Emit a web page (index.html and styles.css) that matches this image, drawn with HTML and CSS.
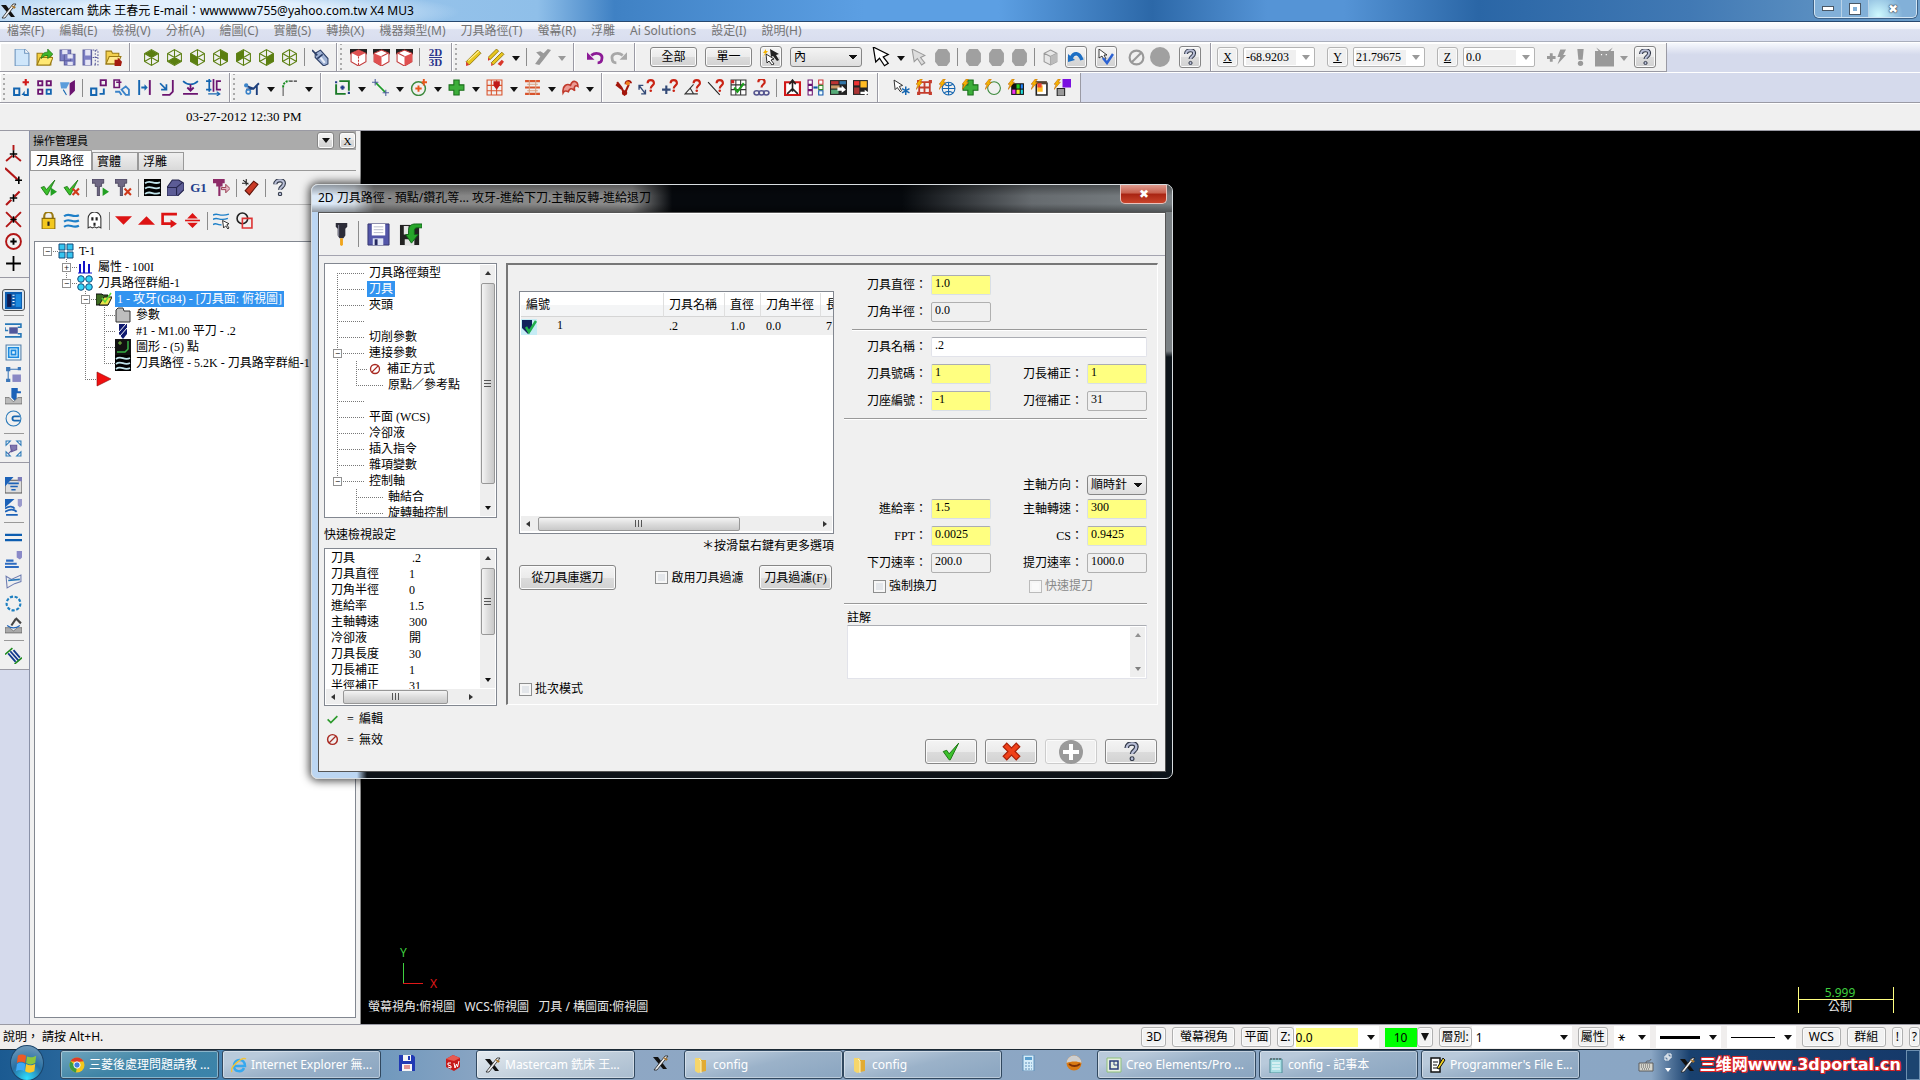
FILE: index.html
```html
<!DOCTYPE html>
<html lang="zh-Hant">
  <head>
    <meta charset="utf-8">
    <title>Mastercam X4 MU3</title>
    <link rel="stylesheet" href="styles.css">
  </head>
  <body>
    <svg class="sprite" aria-hidden="true">
      <!-- files -->
      <symbol id="new" viewBox="0 0 16 16"><path d="M2 0h9l4 4v12H2z" fill="#cfe6fa" stroke="#6c93bd"/><path d="M11 0v4h4" fill="#fff" stroke="#6c93bd"/></symbol>
      <symbol id="open" viewBox="0 0 16 16"><path d="M1 4h5l1 2h7v9H1z" fill="#f5d040" stroke="#9a7a12"/><path d="M1 15l3-7h12l-3 7z" fill="#ffe873" stroke="#9a7a12"/><path d="M5 9c0-5 3-6 6-6V0l5 5-5 4V6c-3 0-4 1-6 3z" fill="#3fb52c" stroke="#1b6b10" stroke-width=".6"/></symbol>
      <symbol id="save" viewBox="0 0 16 16"><path d="M1 1h10v10H1zM5 5h10v10H5z" fill="#7d7fc4" stroke="#5a5c9c"/><path d="M3 1h5v4H3zM8 5h5v4H8zM8 12h5v3H8z" fill="#e6e6f5"/></symbol>
      <symbol id="savepart" viewBox="0 0 16 16"><path d="M1 1h8v14H1z" fill="#7d7fc4" stroke="#5a5c9c"/><path d="M3 1h5v5H3zM3 10h5v5H3z" fill="#e6e6f5"/><path d="M10 1h5v14h-5M12.5 1v14M10 8h5" fill="none" stroke="#5a5c9c" stroke-dasharray="1.5 1.5"/></symbol>
      <symbol id="import" viewBox="0 0 16 16"><path d="M1 2h5l1 2h6v10H1z" fill="#f3d04d" stroke="#9a7a12"/><path d="M1 14l3-7h11l-3 7z" fill="#ffe98c" stroke="#9a7a12"/><path d="M9 10h3V8l4 4-1 4H9z" fill="#a31b10"/></symbol>
      <!-- view cubes -->
      <symbol id="wire" viewBox="0 0 16 16"><path d="M8 .6l6.5 3.7v7.4L8 15.4 1.5 11.700V4.300zM8 8v7.400M8 8l6.500-3.700M8 8L1.500 4.300M8 .6V8M8 8l6.500 3.700M8 8l-6.500 3.700" fill="none" stroke="currentColor"/></symbol>
      <symbol id="ctop" viewBox="0 0 16 16"><path d="M8 1l6 3.300L8 8 2 4.300z" fill="currentColor"/><use href="#wire"/></symbol>
      <symbol id="cbot" viewBox="0 0 16 16"><path d="M8 8l6 3.700L8 15l-6-3.300z" fill="currentColor"/><use href="#wire"/></symbol>
      <symbol id="cleft" viewBox="0 0 16 16"><path d="M1.500 4.300L8 8v7l-6.500-3.300z" fill="currentColor"/><use href="#wire"/></symbol>
      <symbol id="cright" viewBox="0 0 16 16"><path d="M14.500 4.300L8 8v7l6.500-3.300z" fill="currentColor"/><use href="#wire"/></symbol>
      <symbol id="cback" viewBox="0 0 16 16"><path d="M8 1l6.500 3.300v7.400L8 8z" fill="currentColor"/><use href="#wire"/></symbol>
      <symbol id="cside" viewBox="0 0 16 16"><path d="M8 1L1.500 4.300v7.400L8 8z" fill="currentColor"/><use href="#wire"/></symbol>
      <symbol id="rtop" viewBox="0 0 16 16"><path d="M0 0h16v5H0z" fill="#222"/><path d="M8 1l7 3v8l-7 4-7-4V4z" fill="#fff" stroke="#c23a3a"/><path d="M8 1l6 3-6 3-6-3z" fill="#e05050"/><path d="M8 7v8" stroke="#c23a3a" stroke-dasharray="2 1"/></symbol>
      <symbol id="rfront" viewBox="0 0 16 16"><path d="M0 0h16v5H0z" fill="#222"/><path d="M8 1l7 3v8l-7 4-7-4V4z" fill="#fff" stroke="#c23a3a"/><path d="M1 4l7 3v9l-7-4z" fill="#e05050"/><path d="M8 7l6-3" stroke="#c23a3a"/></symbol>
      <symbol id="rside" viewBox="0 0 16 16"><path d="M0 0h16v5H0z" fill="#222"/><path d="M8 1l7 3v8l-7 4-7-4V4z" fill="#fff" stroke="#c23a3a"/><path d="M15 4L8 7v9l7-4z" fill="#e05050"/><path d="M8 7L2 4" stroke="#c23a3a"/></symbol>
      <symbol id="spray" viewBox="0 0 16 16"><path d="M3 4l5-3 7 8v5l-4 2-8-8z" fill="#9fb2d4" stroke="#2c3e66"/><path d="M0 1l5 5M5 9l5-4" stroke="#2c3e66" stroke-width="1.500"/><path d="M8 8l4 5" stroke="#e8eefa" stroke-width="2"/></symbol>
      <!-- pencils, undo -->
      <symbol id="pencil" viewBox="0 0 16 16"><path d="M1 12L12 1l3 3L4 15z" fill="#e8c61e" stroke="#8b7409" stroke-width=".8"/><path d="M1 12l3 3-3 1z" fill="#d9372a"/><path d="M3 11L13 2" stroke="#fff3a0"/></symbol>
      <symbol id="pencils" viewBox="0 0 16 16"><path d="M0 8l8-8 2 2-8 8zM3 13L13 3l2 2L5 15z" fill="#e8c61e" stroke="#8b7409" stroke-width=".8"/><path d="M0 8l2 2-2 1zM3 13l2 2-2 1zM9 14l4-4 2 2-3 4z" fill="#d9372a"/></symbol>
      <symbol id="greypen" viewBox="0 0 16 16"><path d="M1 14l5-7-4-4 4-1 3 2 4-4 3 1-7 9-4 5z" fill="#999"/></symbol>
      <symbol id="undo" viewBox="0 0 16 16"><path d="M4 6c5-4 11-1 10 3 0 2-1 4-4 4" fill="none" stroke="#8c1a96" stroke-width="2.600"/><path d="M0 3v7h7z" fill="#8c1a96"/></symbol>
      <symbol id="redo" viewBox="0 0 16 16"><path d="M12 6C7 2 1 5 2 9c0 2 1 4 4 4" fill="none" stroke="#a8a8a8" stroke-width="2.600"/><path d="M16 3v7H9z" fill="#a8a8a8"/></symbol>
      <!-- selection -->
      <symbol id="cursor" viewBox="0 0 16 16"><path d="M1 0l2 12 3-3 4 6 3-2-4-5 4-2z" fill="#fff" stroke="#000"/></symbol>
      <symbol id="cursorgrey" viewBox="0 0 16 16"><path d="M1 0l2 12 3-3 4 6 3-2-4-5 4-2z" fill="#ddd" stroke="#999"/></symbol>
      <symbol id="cursors" viewBox="0 0 16 16"><path d="M7 0l1 8 2-1 4 5 2-1-3-5 3-1z" fill="#222"/><path d="M3 5l1 9 2-2 3 4 2-1-3-4 3-1z" fill="#fff" stroke="#000" stroke-width=".8"/><path d="M3 0L0 4h2L0 8l5-6H3z" fill="#f5b400"/></symbol>
      <symbol id="blob" viewBox="0 0 16 16"><path d="M4 0h8l3 4v8l-3 4H4l-3-4V4z" fill="#a0a0a0"/></symbol>
      <symbol id="greycube" viewBox="0 0 16 16"><path d="M8 1l6 3v8l-6 3-6-3V4zM8 7v8M8 7l6-3M8 7L2 4" fill="#e6e6e6" stroke="#999"/><path d="M8 7l6-3v8l-6 3z" fill="#bbb"/></symbol>
      <symbol id="arc" viewBox="0 0 16 16"><path d="M3 9c3-6 8-6 11 2" fill="none" stroke="#1d6fc4" stroke-width="3.500"/><path d="M0 13V5l7 6z" fill="#1d6fc4"/></symbol>
      <symbol id="verify" viewBox="0 0 16 16"><path d="M1 0v9l3-2 2 4 2-1-2-4h3z" fill="#fff" stroke="#111" stroke-width=".8"/><path d="M5 9l4 5 6-9" fill="none" stroke="#2c62d2" stroke-width="2.500"/></symbol>
      <symbol id="nogrey" viewBox="0 0 16 16"><circle cx="8" cy="8" r="6.500" fill="none" stroke="#999" stroke-width="2"/><path d="M3 13L13 3" stroke="#999" stroke-width="2"/></symbol>
      <symbol id="greydot" viewBox="0 0 16 16"><circle cx="8" cy="8" r="8" fill="#a0a0a0"/></symbol>
      <symbol id="help" viewBox="0 0 16 16"><path d="M4 5c0-5 9-5 8-.5 0 3-3.500 3-3.500 5.500" fill="none" stroke="#333a4a" stroke-width="4"/><path d="M4 5c0-5 9-5 8-.5 0 3-3.500 3-3.500 5.500" fill="none" stroke="#b8bed6" stroke-width="2"/><circle cx="8.500" cy="14" r="1.600" fill="#b8bed6" stroke="#333a4a"/></symbol>
      <symbol id="plusbolt" viewBox="0 0 20 16"><path d="M0 7h3V4h3v3h3v3H6v3H3v-3H0zM14 0h6l-3 6h3l-9 10 3-8h-3z" fill="#999"/></symbol>
      <symbol id="bang" viewBox="0 0 16 16"><path d="M5 0h6l-1 10H6z" fill="#999"/><circle cx="8" cy="13.500" r="2.500" fill="#999"/></symbol>
      <symbol id="robot" viewBox="0 0 16 16"><path d="M0 3h3L1 0l4 3h6l4-3-2 3h3v13H0z" fill="#999"/><path d="M5 6h1M9 6h1" stroke="#fff"/></symbol>
      <!-- transform -->
      <symbol id="xdyn" viewBox="0 0 16 16"><path d="M1 9h5v6H1zM10 15h4V9" fill="none" stroke="#1465b0" stroke-width="1.800"/><path d="M8 15l3-4v4z" fill="#1465b0"/><path d="M9 3h6M12 0v6" stroke="#d01818" stroke-width="2"/></symbol>
      <symbol id="squares" viewBox="0 0 16 16"><path d="M2 2h4v4H2zM10 2h4v4h-4zM2 10h4v4H2z" fill="none" stroke="#6b1470" stroke-width="1.700"/><path d="M10 10h4v4h-4z" fill="none" stroke="#1465b0" stroke-width="1.700"/></symbol>
      <symbol id="project" viewBox="0 0 16 16"><path d="M1 3h9L7 9H2z" fill="#5b9ddb"/><path d="M10 4l5-3v10l-5 5z" fill="#6b1470"/><path d="M4 10l3 5" stroke="#1465b0"/></symbol>
      <symbol id="move" viewBox="0 0 16 16"><path d="M1 9h5v6H1zM9 14h4V9" fill="none" stroke="#1465b0" stroke-width="1.800"/><path d="M10 1h5v5h-5z" fill="none" stroke="#6b1470" stroke-width="1.700"/></symbol>
      <symbol id="rotate" viewBox="0 0 16 16"><path d="M1 1h5v7H1zM3 3h5" fill="none" stroke="#6b1470" stroke-width="1.500"/><path d="M8 10l4-3 3 3v5h-3zM2 12h4l2 3" fill="none" stroke="#3b83c9" stroke-width="1.700"/></symbol>
      <symbol id="mirror" viewBox="0 0 16 16"><path d="M3 1v14M5 8h4" stroke="#1465b0" stroke-width="1.800"/><path d="M8 5l3 3-3 3z" fill="#1465b0"/><path d="M13 1v14" stroke="#6b1470" stroke-width="1.800"/></symbol>
      <symbol id="offset" viewBox="0 0 16 16"><path d="M1 4l6 6M7 5v5H2" fill="none" stroke="#1465b0" stroke-width="1.600"/><path d="M13 1v11l-3 3H3" fill="none" stroke="#6b1470" stroke-width="1.700"/></symbol>
      <symbol id="drop" viewBox="0 0 16 16"><path d="M1 2c4 4 10 4 14 0" fill="none" stroke="#1465b0" stroke-width="1.500"/><path d="M1 14h14M8 5v6M5 8l3 3 3-3" fill="none" stroke="#6b1470" stroke-width="1.700"/></symbol>
      <symbol id="stretch" viewBox="0 0 16 16"><path d="M1 2h5M1 10h5M4 0v12" stroke="#1465b0" stroke-width="1.600"/><path d="M15 2h-4v8h4M8 0v12" fill="none" stroke="#6b1470" stroke-width="1.600"/><path d="M3 14h11M11 12l3 2-3 2" fill="none" stroke="#1465b0"/></symbol>
      <symbol id="trim" viewBox="0 0 16 16"><path d="M4 7l6 2 5-5M3 10l7-1M13 6v9" fill="none" stroke="#1d3f7c" stroke-width="1.800"/><circle cx="5" cy="12" r="2" fill="none" stroke="#3b83c9" stroke-width="1.500"/><circle cx="3" cy="6" r="2" fill="#3b83c9"/></symbol>
      <symbol id="fillet" viewBox="0 0 16 16"><path d="M2 16V8" stroke="#555"/><path d="M2 8c0-4 2-6 6-6" fill="none" stroke="#138a1d" stroke-width="1.800" stroke-dasharray="2 1"/><path d="M8 2h8" stroke="#333" stroke-dasharray="3 1"/></symbol>
      <!-- sketch -->
      <symbol id="rect" viewBox="0 0 16 16"><path d="M2 2h12v12H2z" fill="none" stroke="#1b7a28" stroke-width="1.800"/><path d="M0 0h5v5H0zM11 11h5v5h-5z" fill="#f0f0f0"/><path d="M2 2v2M14 12v2M6 8h4M8 6v4" stroke="#223c88" stroke-width="2"/></symbol>
      <symbol id="line" viewBox="0 0 16 16"><path d="M3 3l10 10" stroke="#1b9a28" stroke-width="1.500"/><path d="M0 3h6M3 0v6M10 13h6M13 10v6" stroke="#5060a0"/></symbol>
      <symbol id="circle" viewBox="0 0 16 16"><circle cx="8" cy="9" r="6.500" fill="none" stroke="#3d8a3d" stroke-width="1.400"/><path d="M5 9h6M8 6v6M11 3h5M13 0v6" stroke="#e8571d" stroke-width="1.800"/></symbol>
      <symbol id="plus" viewBox="0 0 16 16"><path d="M5.500 1h5v4.500H15v5h-4.500V15h-5v-4.500H1v-5h4.500z" fill="#3cae3a" stroke="#1b6f1c"/></symbol>
      <symbol id="mesh" viewBox="0 0 16 16"><path d="M1 1h14v14H1zM5 1v14M10 1v14M1 6h14M1 11h14" fill="none" stroke="#d9532c"/><path d="M7 2h6v4l-3 4-3-4z" fill="#c01818"/></symbol>
      <symbol id="rows" viewBox="0 0 16 16"><path d="M1 2h14M1 8h14M1 14h14" stroke="#d9532c" stroke-width="2"/><path d="M3 5h10M3 11h10M5 1v14M11 1v14" stroke="#d9a080"/></symbol>
      <symbol id="wing" viewBox="0 0 16 16"><path d="M1 13c-1-7 4-9 7-7 2-6 7-4 7 1-3-2-4 1-3 4-3-3-5-2-6 1-2-1-4-1-5 1z" fill="#eb9a93" stroke="#c0392b" stroke-width="1.500"/></symbol>
      <!-- analyze -->
      <symbol id="qnode" viewBox="0 0 16 16"><path d="M1 5l5 4M2 3l4 5 3 6 4-9M10 5c0-4 5-4 5-1" fill="none" stroke="#a3160c" stroke-width="2"/><circle cx="12" cy="4" r="2" fill="#f08020"/><circle cx="9" cy="13" r="2.500" fill="#a3160c"/></symbol>
      <symbol id="q" viewBox="0 0 16 16"><path d="M9 4c0-4 6-4 6 0 0 2-3 2-3 5" fill="none" stroke="#c92314" stroke-width="2"/><circle cx="12" cy="11" r="1.200" fill="#c92314"/></symbol>
      <symbol id="q2" viewBox="0 0 16 16"><path d="M1 6l6 8M1 10V6h4M7 10v4H3" fill="none" stroke="#334a77" stroke-width="1.300"/><use href="#q"/></symbol>
      <symbol id="q3" viewBox="0 0 16 16"><path d="M1 10h8M5 6v8" stroke="#334a77" stroke-width="2"/><use href="#q"/></symbol>
      <symbol id="q4" viewBox="0 0 16 16"><path d="M9 5l-8 9h12M6 9l3 5" fill="none" stroke="#333"/><use href="#q"/></symbol>
      <symbol id="q5" viewBox="0 0 16 16"><path d="M1 3l11 12" stroke="#222"/><use href="#q"/></symbol>
      <symbol id="gridok" viewBox="0 0 16 16"><path d="M1 1h14v14H1zM5.500 1v14M10 1v14M1 5.500h14M1 10h14" fill="#fff" stroke="#333"/><path d="M4 8l3 4 6-8" fill="none" stroke="#1c9c1c" stroke-width="2"/><path d="M1 1h3v3H1z" fill="#c22"/></symbol>
      <symbol id="qchain" viewBox="0 0 16 16"><path d="M5 3c0-4 6-4 6 0 0 2-3 2-3 5" fill="none" stroke="#c92314" stroke-width="2"/><g fill="none" stroke="#55558f" stroke-width="1.500"><ellipse cx="3.500" cy="13" rx="2.500" ry="2"/><ellipse cx="8" cy="13" rx="2.500" ry="2"/><ellipse cx="12.500" cy="13" rx="2.500" ry="2"/></g></symbol>
      <symbol id="redframe" viewBox="0 0 16 16"><path d="M1 3h14v12H1z" fill="#fff" stroke="#d01818" stroke-width="2"/><path d="M8 12V2M5 5l3-4 3 4M3 14l5-5 5 5" fill="none" stroke="#222" stroke-width="1.500"/></symbol>
      <symbol id="levels" viewBox="0 0 16 16"><path d="M1 1h4v4H1zM1 6h4v4H1zM1 11h4v4H1z" fill="#fff" stroke="#6b1470"/><path d="M11 1h4v4h-4z" fill="#fff" stroke="#c33"/><path d="M11 6h4v4h-4z" fill="#ffe" stroke="#383"/><path d="M11 11h4v4h-4z" fill="#eff" stroke="#15a"/><path d="M6 8h4" stroke="#15a" stroke-width="2"/></symbol>
      <symbol id="colors" viewBox="0 0 16 16"><path d="M0 1h16v14H0z" fill="#222"/><path d="M1 2h7v3H1z" fill="#b33"/><path d="M9 2h6v3H9z" fill="#37a"/><path d="M1 6h8v3H1z" fill="#c96"/><path d="M1 10h7v4H1z" fill="#5a7"/><path d="M7 8h4V6l4 4-4 3v-2H7z" fill="#fff"/></symbol>
      <symbol id="swap" viewBox="0 0 16 16"><path d="M0 1h14v14H0z" fill="#222"/><path d="M1 2h5v4H1z" fill="#e33"/><path d="M7 2h6v6H7z" fill="#fb2"/><path d="M1 8h5v6H1z" fill="#a33"/><path d="M7 12h4v-2l4 3-4 3v-2H7z" fill="#fff"/></symbol>
      <symbol id="bolt" viewBox="0 0 16 16"><path d="M4 0L0 5h2L0 10l6-7H4l2-3z" fill="#f5b400" stroke="#c06000" stroke-width=".5"/></symbol>
      <symbol id="star" viewBox="0 0 16 16"><path d="M1 1l1 9 2-2 3 4 1-1-2-4 3-1z" fill="#fff" stroke="#111" stroke-width=".8"/><path d="M12 7v8M8.500 9l7 4M8.500 13l7-4" stroke="#1465b0" stroke-width="1.400"/></symbol>
      <symbol id="boltgrid" viewBox="0 0 16 16"><path d="M3 3h10v10H3zM8 3v10M3 8h10" fill="none" stroke="#c43c2c" stroke-width="1.700"/><path d="M1 1h3v3H1zM12 1h3v3h-3zM1 12h3v3H1zM12 12h3v3h-3z" fill="#c43c2c"/><use href="#bolt"/></symbol>
      <symbol id="boltglobe" viewBox="0 0 16 16"><circle cx="9" cy="9" r="6" fill="none" stroke="#1465b0"/><path d="M3 9h12M9 3v12M5 5c3 2 5 2 8 0M5 13c3-2 5-2 8 0" fill="none" stroke="#1465b0"/><use href="#bolt"/></symbol>
      <symbol id="boltplus" viewBox="0 0 16 16"><use href="#plus"/><use href="#bolt"/></symbol>
      <symbol id="boltring" viewBox="0 0 16 16"><circle cx="8.500" cy="8.500" r="6" fill="none" stroke="#3d8a3d"/><use href="#bolt"/></symbol>
      <symbol id="boltrgb" viewBox="0 0 16 16"><path d="M3 4h12v11H3z" fill="#111"/><path d="M8 5h3v4H8z" fill="#2c2"/><path d="M12 5h2v4h-2z" fill="#28f"/><path d="M4 10h3v4H4z" fill="#e3e"/><path d="M8 10h3v4H8z" fill="#ee2"/><path d="M12 10h2v4h-2z" fill="#2dd"/><use href="#bolt"/></symbol>
      <symbol id="boltwin" viewBox="0 0 16 16"><path d="M5 4h10v11H5z" fill="#fff" stroke="#222" stroke-width="1.500"/><path d="M4 2h11v3H4z" fill="#543"/><path d="M6 6h5v6H6z" fill="#fb2"/><path d="M6 4h4v4H6z" fill="#e43"/><use href="#bolt"/></symbol>
      <symbol id="boltbox" viewBox="0 0 16 16"><path d="M8 0h8v8H8z" fill="#7a10e0"/><path d="M3 9h7v7H3z" fill="#999" stroke="#222"/><use href="#bolt"/></symbol>
      <!-- side strip -->
      <symbol id="pt1" viewBox="0 0 16 16"><path d="M8 0v5M1 15l6-5M15 15l-6-5" stroke="#b21616" stroke-width="1.800"/><path d="M8 5v7M4.500 8.500h7" stroke="#000" stroke-width="1.500"/></symbol>
      <symbol id="pt2" viewBox="0 0 16 16"><path d="M0 1l12 11" stroke="#b21616" stroke-width="2"/><path d="M13 9v7M9.500 12.500H16" stroke="#000" stroke-width="1.500"/></symbol>
      <symbol id="pt3" viewBox="0 0 16 16"><path d="M1 15L15 1" stroke="#b21616" stroke-width="2" stroke-dasharray="7 4"/><path d="M8 5v7M4.500 8.500h7" stroke="#000" stroke-width="1.500"/></symbol>
      <symbol id="pt4" viewBox="0 0 16 16"><path d="M1 1l14 14M1 15L15 1" stroke="#b21616" stroke-width="1.800"/><path d="M8 5v6M5 8h6" stroke="#000" stroke-width="1.500"/></symbol>
      <symbol id="pt5" viewBox="0 0 16 16"><circle cx="8" cy="8" r="7" fill="none" stroke="#b21616" stroke-width="1.800"/><path d="M8 5v6M5 8h6" stroke="#000" stroke-width="1.800"/></symbol>
      <symbol id="pt6" viewBox="0 0 16 16"><path d="M8 1v14M1 8h14" stroke="#000" stroke-width="1.700"/></symbol>
      <symbol id="panel" viewBox="0 0 16 16"><path d="M0 0h16v16H0z" fill="#0c5db0"/><path d="M2 2h4v12H2z" fill="#101c50"/><path d="M7 3h2M7 6h2M7 9h2M7 12h2" stroke="#fff"/><path d="M10 2h5v12h-5z" fill="#1c8ae0"/></symbol>
      <symbol id="mill" viewBox="0 0 16 16"><path d="M0 2h15v3h-3M0 5v3h3M0 14h15v-3h-3" fill="none" stroke="#2878b8" stroke-width="1.500"/><path d="M4 5h8v6H4z" fill="#51589c"/></symbol>
      <symbol id="pocket" viewBox="0 0 16 16"><path d="M1 1h14v14H1z" fill="#dff4fc" stroke="#567fa8"/><path d="M3.500 3.500h9v9h-9zM6 6h4v4H6z" fill="none" stroke="#1c8ae0" stroke-width="1.500"/></symbol>
      <symbol id="wireframe" viewBox="0 0 16 16"><path d="M3 3h11M3 3v11" stroke="#3b76b8"/><path d="M1 1h4v4H1zM12 1h3v3h-3zM1 12h4v3H1z" fill="#3b76b8"/><path d="M7 8h8v7H7z" fill="#8a88c4"/></symbol>
      <symbol id="drill" viewBox="0 0 16 16"><path d="M6 0h6v3h3v2h-4v5l-2 2-3-3z" fill="#1c62b8"/><path d="M0 9h4l4 4 4-4h4v6H0z" fill="#bbb" stroke="#555" stroke-width=".6"/></symbol>
      <symbol id="slot" viewBox="0 0 16 16"><circle cx="8" cy="8" r="7" fill="none" stroke="#2878b8"/><path d="M14 6H9a2 2 0 000 4h5" fill="none" stroke="#1465b0" stroke-width="1.700"/></symbol>
      <symbol id="corners" viewBox="0 0 16 16"><path d="M1 5V1h4zM11 1h4v4zM1 11v4h4zM11 15h4v-4z" fill="none" stroke="#2878b8"/><path d="M5 5h6v4l-5 2zM3 13l4-4" fill="#8078b0" stroke="#655a9a"/></symbol>
      <symbol id="surf" viewBox="0 0 16 16"><path d="M0 3h16v12H0z" fill="#ddd" stroke="#555"/><path d="M0 0h8L0 9z" fill="#1c62b8"/><path d="M3 6h10M5 9h7M6 12h4" stroke="#1c62b8" stroke-width="1.500"/><path d="M12 0h4v4h-4z" fill="#7c7cb8"/></symbol>
      <symbol id="rough" viewBox="0 0 16 16"><path d="M0 0h9L0 8z" fill="#1c62b8"/><path d="M0 9c4-3 8-2 9 0M0 12c5-3 9-2 11 0M1 15h11" fill="none" stroke="#1c62b8" stroke-width="1.700"/><path d="M12 0h4v6l-2 2-2-2z" fill="#9a9acc"/></symbol>
      <symbol id="two" viewBox="0 0 16 16"><path d="M0 5.500h16M0 10.500h16" stroke="#0c5db0" stroke-width="2"/></symbol>
      <symbol id="finish" viewBox="0 0 16 16"><path d="M1 9h7M0 12h11M0 15h13" stroke="#2d6bc0" stroke-width="2"/><path d="M11 0h5v6l-2 2-3-2z" fill="#8a8ac8"/></symbol>
      <symbol id="blade" viewBox="0 0 16 16"><path d="M1 3l5 3 9-4v6l-6 2-7 4z" fill="none" stroke="#6d7cb0"/><path d="M3 7l11-1" stroke="#2878b8" stroke-width="1.500"/></symbol>
      <symbol id="ring" viewBox="0 0 16 16"><circle cx="8" cy="8" r="6.500" fill="none" stroke="#1d7fc0" stroke-width="2" stroke-dasharray="3 1.500"/></symbol>
      <symbol id="mold" viewBox="0 0 16 16"><path d="M0 10h4l4 3 4-3h4v5H0z" fill="#aaa" stroke="#555" stroke-width=".6"/><path d="M2 8c4 3 8 3 12 0" fill="none" stroke="#1c62b8"/><path d="M6 8l4-6M10 1l5 5" stroke="#444" stroke-width="2"/></symbol>
      <symbol id="hatch" viewBox="0 0 16 16"><path d="M3 6l7 8M5 4l8 9M8 3l6 7" stroke="#123a8c" stroke-width="1.700"/><path d="M0 7l7-6M9 16l7-6" stroke="#1c8a1c" stroke-width="1.500"/></symbol>
      <!-- operations manager -->
      <symbol id="check" viewBox="0 0 16 16"><path d="M1 8l3-1 2 3 8-9-7 14H6z" fill="#3cc02c" stroke="#197510" stroke-width=".8"/></symbol>
      <symbol id="play" viewBox="0 0 16 16"><path d="M10 8l6 4-6 4z" fill="#23a023"/></symbol>
      <symbol id="minix" viewBox="0 0 16 16"><path d="M9 9l6 6M15 9l-6 6" stroke="#d0391b" stroke-width="2"/></symbol>
      <symbol id="selall" viewBox="0 0 16 16"><use href="#check"/><use href="#play"/></symbol>
      <symbol id="selnone" viewBox="0 0 16 16"><use href="#check"/><use href="#minix"/></symbol>
      <symbol id="tool" viewBox="0 0 16 16"><path d="M0 0h11v4H9v3H7v9H5V7H3V4H0z" fill="#6f6884" stroke="#3d3750" stroke-width=".7"/></symbol>
      <symbol id="regen" viewBox="0 0 16 16"><use href="#tool"/><use href="#play"/></symbol>
      <symbol id="regenx" viewBox="0 0 16 16"><use href="#tool"/><use href="#minix"/></symbol>
      <symbol id="waves" viewBox="0 0 16 16"><path d="M0 0h16v16H0z" fill="#000"/><path d="M1 4c5-4 8 2 14-1M1 9c5-4 8 2 14-1M1 14c5-4 8 2 14-1" fill="none" stroke="#bfe3ea" stroke-width="1.700"/></symbol>
      <symbol id="solid" viewBox="0 0 16 16"><path d="M0 8l5-7h6l5 3v6l-6 6H0z" fill="#5c5c96" stroke="#26264e"/><path d="M0 8h9l6-5M9 8v7" fill="none" stroke="#26264e"/></symbol>
      <symbol id="feed" viewBox="0 0 16 16"><path d="M0 0h11v4H9v3H7v9H5V7H3V4H0z" fill="#8e2b68"/><path d="M8 8h4V5l4 4-4 4v-3H8z" fill="#e3b6c5" stroke="#8e2b40" stroke-width=".8"/></symbol>
      <symbol id="dynamite" viewBox="0 0 16 16"><path d="M3 11l8-9 4 3-8 10z" fill="#c93a26" stroke="#5d140b"/><path d="M1 1l5 4M4 0v6M0 4h6" stroke="#222"/></symbol>
      <symbol id="lock" viewBox="0 0 16 16"><path d="M4 7V4a4 4 0 018 0v3" fill="none" stroke="#9a7a12" stroke-width="2"/><path d="M2 6h12v10H2z" fill="#f3c81e" stroke="#8b6c09"/><path d="M7 9h2v4H7z" fill="#222"/></symbol>
      <symbol id="bwaves" viewBox="0 0 16 16"><path d="M1 4c5-4 8 2 14-1M1 9c5-4 8 2 14-1M1 14c5-4 8 2 14-1" fill="none" stroke="#1d7fc8" stroke-width="2"/></symbol>
      <symbol id="ghost" viewBox="0 0 16 16"><path d="M2 15V6a6 6 0 0112 0v9l-2-1-2 1-2-1-2 1-2-1z" fill="#fff" stroke="#333"/><path d="M5 5h2v3H5zM9 5h2v3H9zM7 10h2v3H7z" fill="#222"/></symbol>
      <symbol id="down" viewBox="0 0 16 16"><path d="M0 4h16l-8 8z" fill="#dd1414"/></symbol>
      <symbol id="up" viewBox="0 0 16 16"><path d="M0 12h16L8 4z" fill="#dd1414"/></symbol>
      <symbol id="insert" viewBox="0 0 16 16"><path d="M15 2H1.500v9H10" fill="none" stroke="#dd1414" stroke-width="2.500"/><path d="M9 7l6 4-6 4z" fill="#dd1414"/></symbol>
      <symbol id="updown" viewBox="0 0 16 16"><path d="M3 6l5-5 5 5zM3 10l5 5 5-5z" fill="#dd1414"/><path d="M1 8h14" stroke="#dd1414" stroke-width="1.500"/></symbol>
      <symbol id="wavecur" viewBox="0 0 16 16"><path d="M0 3c4-3 6 2 15-1M0 7c4-3 6 2 14-1M0 12c3-3 4 1 8 0" fill="none" stroke="#1d7fc8" stroke-width="1.300"/><path d="M9 8l1 7 2-2 2 3 1-1-2-3 2-1z" fill="#fff" stroke="#111" stroke-width=".8"/></symbol>
      <symbol id="shapes" viewBox="0 0 16 16"><circle cx="6" cy="6" r="5" fill="none" stroke="#222" stroke-width="1.500"/><path d="M6 6h9v9H6z" fill="none" stroke="#d33" stroke-width="1.500"/></symbol>
      <symbol id="machine" viewBox="0 0 16 16"><path d="M1 1h6v6H1zM9 1h6v6H9zM1 9h6v6H1zM9 9h6v6H9z" fill="#36c5f0" stroke="#124a7a"/></symbol>
      <symbol id="props" viewBox="0 0 16 16"><path d="M3 5v9M7 2v12M12 5v9" stroke="#1212c8" stroke-width="2"/><path d="M1 14h14" stroke="#1212c8"/></symbol>
      <symbol id="group" viewBox="0 0 16 16"><g fill="#36d5f8" stroke="#124a7a"><circle cx="4" cy="4" r="3.300"/><circle cx="12" cy="4" r="3.300"/><circle cx="4" cy="12" r="3.300"/><circle cx="12" cy="12" r="3.300"/></g></symbol>
      <symbol id="opfold" viewBox="0 0 16 16"><path d="M0 3h6l1 1h5v10H0z" fill="#3c6b22" stroke="#111"/><path d="M3 14l5-8h8l-4 8z" fill="#e9e34b" stroke="#111"/><path d="M6 7l3 4 6-9" fill="none" stroke="#5fd838" stroke-width="1.500"/></symbol>
      <symbol id="folder" viewBox="0 0 16 16"><path d="M1 3l2-2h5l1 3h6v11H1z" fill="#bdbdbd" stroke="#333"/></symbol>
      <symbol id="bit" viewBox="0 0 16 16"><path d="M4 1h8v10l-4 5-4-5z" fill="#101a70"/><path d="M4 9l7-8M5 13l7-8" stroke="#fff"/></symbol>
      <symbol id="geom" viewBox="0 0 16 16"><path d="M0 0h16v16H0z" fill="#111"/><path d="M13 2v8l-3 3H2" fill="none" stroke="#36b044" stroke-width="1.500"/><path d="M3 4h4M5 2v4" stroke="#7ac142"/></symbol>
      <symbol id="redplay" viewBox="0 0 16 16"><path d="M1 1l14 7-14 7z" fill="#f01010" stroke="#8c0a0a" stroke-width=".6"/></symbol>
      <!-- dialog -->
      <symbol id="holder" viewBox="0 0 24 24"><path d="M6 0h12v4l-2 2v7l-2 3h-4l-2-3V6L6 4z" fill="#2c2c38"/><path d="M9 2v12" stroke="#8c8ca0"/><path d="M10.500 16h3v7l-1.500 1-1.500-1z" fill="#f0a51c"/></symbol>
      <symbol id="disk" viewBox="0 0 24 24"><path d="M1 1h22v22H1z" fill="#5356a8" stroke="#34366f"/><path d="M5 1h14v12H5z" fill="#fff"/><path d="M7 4h10M7 7h10M7 10h10" stroke="#b9bccc"/><path d="M6 16h11v7H6z" fill="#dfe4f5"/><path d="M8 17h3v6H8z" fill="#24275f"/></symbol>
      <symbol id="diskdown" viewBox="0 0 24 24"><path d="M1 2h20v21H1z" fill="#222"/><path d="M5 3h5v9H5zM6 17h10v6H6z" fill="#e4e4e4"/><path d="M24 1v4h-5c-2 0-3 1-3 3v4h4l-7 9-6-9h3V8c0-5 3-7 7-7z" fill="#27a62b" stroke="#12661a"/></symbol>
      <symbol id="toolok" viewBox="0 0 16 16"><path d="M0 0h16v16H0z" fill="#c5ecf5"/><path d="M1 1h10v9l-4 5-6-6z" fill="#12205c"/><path d="M5 8l3 5 7-11" fill="none" stroke="#22b04c" stroke-width="2.500"/></symbol>
      <symbol id="edit" viewBox="0 0 16 16"><path d="M2 9l4 4 8-8" fill="none" stroke="#2c9a2c" stroke-width="2"/></symbol>
      <symbol id="no" viewBox="0 0 16 16"><circle cx="8" cy="8" r="6" fill="none" stroke="#a82a22" stroke-width="1.800"/><path d="M4 12l8-8" stroke="#a82a22" stroke-width="1.500"/></symbol>
      <symbol id="cross" viewBox="0 0 16 16"><path d="M4 1l4 4 4-4 3 3-4 4 4 4-3 3-4-4-4 4-3-3 4-4-4-4z" fill="#f04018" stroke="#a81f06"/></symbol>
      <symbol id="addgrey" viewBox="0 0 24 24"><circle cx="12" cy="12" r="12" fill="#9a9a9a"/><path d="M12 4v16M4 12h16" stroke="#fff" stroke-width="4"/></symbol>
      <!-- taskbar -->
      <symbol id="xlogo" viewBox="0 0 16 16"><path d="M0 2h5l9 12h-4z" fill="#111"/><path d="M12 1L1 15h3L15 1z" fill="#eee" stroke="#222" stroke-width=".8"/><path d="M10 2l5 2-2 2z" fill="#a8742a"/></symbol>
      <symbol id="chrome" viewBox="0 0 16 16"><circle cx="8" cy="8" r="7.500" fill="#f3c81e"/><path d="M1.500 4.200a7.500 7.500 0 0113 0L8 5z" fill="#dc3b2a"/><path d="M1.500 4.200a7.500 7.500 0 005.500 11.200L8 10z" fill="#3a9c43"/><circle cx="8" cy="8" r="3.200" fill="#3e7de0" stroke="#fff"/></symbol>
      <symbol id="ie" viewBox="0 0 16 16"><path d="M4 9h10c0-8-11-8-11 0 0 6 8 7 10 2" fill="none" stroke="#36a8ee" stroke-width="2.500"/><path d="M1 15C-2 11 11-1 15 2" fill="none" stroke="#f0c33a" stroke-width="1.500"/></symbol>
      <symbol id="floppy" viewBox="0 0 16 16"><path d="M0 0h14l2 2v14H0z" fill="#2039b4"/><path d="M4 0h8v6H4zM3 9h10v7H3z" fill="#f5f5f5"/><path d="M9 1h2v4H9z" fill="#2039b4"/><path d="M5 11h6M5 13h6" stroke="#c33"/></symbol>
      <symbol id="sw" viewBox="0 0 16 16"><path d="M1 4l7-4 7 3v9l-6 4-8-4z" fill="#c61a1a"/><path d="M1 4l7-4 7 3-6 3z" fill="#e85a50"/><path d="M6 8L3 8v2l3 1v2l-3-1M9 8l1 5 1.500-4 1 3L14 6" fill="none" stroke="#fff"/></symbol>
      <symbol id="yfolder" viewBox="0 0 16 16"><path d="M2 1h5l2 2v12l-4 1-3-2z" fill="#f6d66b"/><path d="M8 3h5v11l-5 1z" fill="#e2ab33"/><path d="M6 2l2 2v12" fill="none" stroke="#fff4c0"/></symbol>
      <symbol id="calc" viewBox="0 0 16 16"><path d="M3 0h11v16H3z" fill="#d5ecf9" stroke="#5f8fb8"/><path d="M5 2h7v3H5z" fill="#5aa0d0"/><path d="M5 8h7M5 11h7M5 14h7" stroke="#5f8fb8" stroke-dasharray="2 1"/></symbol>
      <symbol id="ball" viewBox="0 0 16 16"><circle cx="8" cy="8" r="7.500" fill="#d97a14"/><path d="M.5 8a7.500 7.500 0 0115 0c-4-2-10-2-15 0z" fill="#cfcfcf"/><path d="M3 9c4 3 7 3 11 0" fill="none" stroke="#7d3006" stroke-width="2"/></symbol>
      <symbol id="creo" viewBox="0 0 16 16"><path d="M1 1h14v14H1z" fill="#e5efe0" stroke="#8ec07a"/><path d="M4 4h8v8H4z" fill="none" stroke="#2b3f7c" stroke-width="1.500"/><path d="M8 4v4h4" fill="none" stroke="#2b3f7c"/></symbol>
      <symbol id="note-icon" viewBox="0 0 16 16"><path d="M2 2h12v14H2z" fill="#a9dfe4" stroke="#4c8c98"/><path d="M4 6h8M4 9h8M4 12h8" stroke="#fff"/><path d="M3 1v2M6 1v2M9 1v2M12 1v2" stroke="#444"/></symbol>
      <symbol id="pfe" viewBox="0 0 16 16"><path d="M1 1h9v14H1z" fill="#fff" stroke="#111" stroke-width="1.500"/><path d="M3 5h5M3 8h4M3 11h5" stroke="#111"/><path d="M7 11l6-10 2 2-6 9z" fill="#f0d020" stroke="#111"/></symbol>
      <symbol id="kbd" viewBox="0 0 16 16"><path d="M1 6h14v8H1z" fill="#d5d5cc" stroke="#5d5d5d"/><path d="M3 8h10M3 10h10M4 12h8" stroke="#5d5d5d" stroke-dasharray="1 1"/><path d="M8 6c0-4 4 0 5-4" fill="none" stroke="#5d5d5d"/></symbol>
      <symbol id="langbar" viewBox="0 0 8 24"><path d="M3 1h4v4H3zM1 3h4v4H1z" fill="none" stroke="#fff"/><path d="M1 15h6l-3 4z" fill="#fff"/></symbol>
      <symbol id="winlogo" viewBox="0 0 24 24"><path d="M2 4c4-2 6-1 9 0l-1 8c-3-2-6-2-9 0z" fill="#ee5a24"/><path d="M12 5c4 1 6 1 10-1l-1 8c-4 2-7 2-10 0z" fill="#8cc63f"/><path d="M1 13c3-2 6-2 9 0l-1 8c-3-2-6-2-9 0z" fill="#3fa9f5"/><path d="M11 13c3 2 6 2 10 0l-1 8c-4 2-7 2-10 0z" fill="#fbc92b"/></symbol>
    </svg>

    <header class="titlebar">
      <svg class="ico"><use href="#xlogo"/></svg>
      <h1>Mastercam 銑床 王春元 E-mail：wwwwww755@yahoo.com.tw X4 MU3</h1>
      <div class="wincontrols">
        <button aria-label="Minimize"><span class="min"></span></button>
        <button aria-label="Restore"><span class="max"></span></button>
        <button class="wide" aria-label="Close">✖</button>
      </div>
    </header>

    <nav class="menubar">
      <a href="#">檔案(F)</a><a href="#">編輯(E)</a><a href="#">檢視(V)</a><a href="#">分析(A)</a><a href="#">繪圖(C)</a><a href="#">實體(S)</a><a href="#">轉換(X)</a><a href="#">機器類型(M)</a><a href="#">刀具路徑(T)</a><a href="#">螢幕(R)</a><a href="#">浮雕</a><a href="#">Ai Solutions</a><a href="#">設定(I)</a><a href="#">說明(H)</a>
    </nav>

    <div class="toolrow">
      <div class="group">
        <button class="tool"><svg><use href="#new"/></svg></button>
        <button class="tool"><svg><use href="#open"/></svg></button>
        <button class="tool"><svg><use href="#save"/></svg></button>
        <button class="tool"><svg><use href="#savepart"/></svg></button>
        <button class="tool"><svg><use href="#import"/></svg></button>
      </div>
      <div class="group green">
        <button class="tool"><svg><use href="#ctop"/></svg></button>
        <button class="tool"><svg><use href="#cbot"/></svg></button>
        <button class="tool"><svg><use href="#cleft"/></svg></button>
        <button class="tool"><svg><use href="#cback"/></svg></button>
        <button class="tool"><svg><use href="#cside"/></svg></button>
        <button class="tool"><svg><use href="#cright"/></svg></button>
        <button class="tool"><svg><use href="#wire"/></svg></button>
        <i class="sep"></i>
        <button class="tool"><svg><use href="#spray"/></svg></button>
      </div>
      <div class="group grip">
        <button class="tool"><svg><use href="#rtop"/></svg></button>
        <button class="tool"><svg><use href="#rfront"/></svg></button>
        <button class="tool"><svg><use href="#rside"/></svg></button>
        <i class="sep"></i>
        <button class="tool dim"><span>2D</span><span>3D</span></button>
      </div>
      <div class="group grip">
        <button class="tool"><svg><use href="#pencil"/></svg></button>
        <button class="tool"><svg><use href="#pencils"/></svg></button>
        <button class="more" aria-label="More"></button>
        <i class="sep"></i>
        <button class="tool"><svg><use href="#greypen"/></svg></button>
        <button class="more off" aria-label="More"></button>
      </div>
      <div class="group">
        <button class="tool"><svg><use href="#undo"/></svg></button>
        <button class="tool"><svg><use href="#redo"/></svg></button>
      </div>
      <div class="group select-group">
        <button class="btn">全部</button>
        <button class="btn">單一</button>
        <button class="btn square"><svg class="ico"><use href="#cursors"/></svg></button>
        <select class="combo" aria-label="Selection mode"><option>內</option></select>
        <div class="picks">
          <button class="tool"><svg class="big"><use href="#cursor"/></svg></button>
          <button class="more" aria-label="More"></button>
          <button class="tool"><svg><use href="#cursorgrey"/></svg></button>
          <button class="tool"><svg><use href="#blob"/></svg></button>
          <i class="sep"></i>
          <button class="tool"><svg><use href="#blob"/></svg></button>
          <button class="tool"><svg><use href="#blob"/></svg></button>
          <button class="tool"><svg><use href="#blob"/></svg></button>
          <i class="sep"></i>
          <button class="tool"><svg><use href="#greycube"/></svg></button>
          <button class="btn square"><svg class="ico"><use href="#arc"/></svg></button>
        </div>
        <button class="btn square"><svg class="ico"><use href="#verify"/></svg></button>
        <div class="picks">
          <button class="tool"><svg><use href="#nogrey"/></svg></button>
          <button class="tool"><svg class="big"><use href="#greydot"/></svg></button>
        </div>
        <button class="btn square"><svg class="ico"><use href="#help"/></svg></button>
      </div>
      <div class="group coords">
        <button class="btn axis">X</button>
        <span class="coord"><input aria-label="X" value="-68.9203"><i class="tri"></i></span>
        <button class="btn axis">Y</button>
        <span class="coord"><input aria-label="Y" value="21.79675"><i class="tri"></i></span>
        <button class="btn axis">Z</button>
        <span class="coord"><input aria-label="Z" value="0.0"><i class="tri"></i></span>
        <button class="tool"><svg class="big"><use href="#plusbolt"/></svg></button>
        <button class="tool"><svg><use href="#bang"/></svg></button>
        <button class="tool"><svg class="big"><use href="#robot"/></svg></button>
        <button class="more off" aria-label="More"></button>
        <button class="btn square"><svg class="ico"><use href="#help"/></svg></button>
      </div>
    </div>

    <div class="toolrow second">
      <div class="group grip first">
        <button class="tool"><svg><use href="#xdyn"/></svg></button>
        <button class="tool"><svg><use href="#squares"/></svg></button>
        <button class="tool"><svg><use href="#project"/></svg></button>
        <i class="sep"></i>
        <button class="tool"><svg><use href="#move"/></svg></button>
        <button class="tool"><svg><use href="#rotate"/></svg></button>
        <button class="tool"><svg><use href="#mirror"/></svg></button>
        <button class="tool"><svg><use href="#offset"/></svg></button>
        <button class="tool"><svg><use href="#drop"/></svg></button>
        <button class="tool"><svg><use href="#stretch"/></svg></button>
      </div>
      <div class="group grip">
        <button class="tool"><svg><use href="#trim"/></svg></button><button class="more" aria-label="More"></button>
        <button class="tool"><svg><use href="#fillet"/></svg></button><button class="more" aria-label="More"></button>
      </div>
      <div class="group">
        <button class="tool"><svg><use href="#rect"/></svg></button><button class="more" aria-label="More"></button>
        <button class="tool"><svg><use href="#line"/></svg></button><button class="more" aria-label="More"></button>
        <button class="tool"><svg><use href="#circle"/></svg></button><button class="more" aria-label="More"></button>
        <button class="tool"><svg><use href="#plus"/></svg></button><button class="more" aria-label="More"></button>
        <button class="tool"><svg><use href="#mesh"/></svg></button><button class="more" aria-label="More"></button>
        <button class="tool"><svg><use href="#rows"/></svg></button><button class="more" aria-label="More"></button>
        <button class="tool"><svg><use href="#wing"/></svg></button><button class="more" aria-label="More"></button>
      </div>
      <div class="group">
        <button class="tool"><svg><use href="#qnode"/></svg></button>
        <button class="tool"><svg><use href="#q2"/></svg></button>
        <button class="tool"><svg><use href="#q3"/></svg></button>
        <button class="tool"><svg><use href="#q4"/></svg></button>
        <button class="tool"><svg><use href="#q5"/></svg></button>
        <button class="tool"><svg><use href="#gridok"/></svg></button>
        <button class="tool"><svg><use href="#qchain"/></svg></button>
        <i class="sep"></i>
        <button class="tool"><svg><use href="#redframe"/></svg></button>
        <button class="tool"><svg><use href="#levels"/></svg></button>
        <button class="tool"><svg><use href="#colors"/></svg></button>
        <button class="tool"><svg><use href="#swap"/></svg></button>
      </div>
      <div class="group">
        <button class="tool"><svg><use href="#star"/></svg></button>
        <button class="tool"><svg><use href="#boltgrid"/></svg></button>
        <button class="tool"><svg><use href="#boltglobe"/></svg></button>
        <button class="tool"><svg><use href="#boltplus"/></svg></button>
        <button class="tool"><svg><use href="#boltring"/></svg></button>
        <button class="tool"><svg><use href="#boltrgb"/></svg></button>
        <button class="tool"><svg><use href="#boltwin"/></svg></button>
        <button class="tool"><svg><use href="#boltbox"/></svg></button>
      </div>
    </div>

    <div class="ribbon">03-27-2012 12:30 PM</div>

    <main class="workspace">
      <aside class="strip">
        <div class="strip-group">
          <button class="tool"><svg><use href="#pt1"/></svg></button>
          <button class="tool"><svg><use href="#pt2"/></svg></button>
          <button class="tool"><svg><use href="#pt3"/></svg></button>
          <button class="tool"><svg><use href="#pt4"/></svg></button>
          <button class="tool"><svg><use href="#pt5"/></svg></button>
          <button class="tool"><svg><use href="#pt6"/></svg></button>
        </div>
        <div class="strip-group">
          <button class="tool pressed"><svg><use href="#panel"/></svg></button>
          <i class="bar"></i>
          <button class="tool"><svg><use href="#mill"/></svg></button>
          <button class="tool"><svg><use href="#pocket"/></svg></button>
          <button class="tool"><svg><use href="#wireframe"/></svg></button>
          <button class="tool"><svg><use href="#drill"/></svg></button>
          <button class="tool"><svg><use href="#slot"/></svg></button>
          <i class="bar"></i>
          <button class="tool"><svg><use href="#corners"/></svg></button>
        </div>
        <div class="strip-group">
          <button class="tool"><svg><use href="#surf"/></svg></button>
          <button class="tool"><svg><use href="#rough"/></svg></button>
          <i class="bar"></i>
          <button class="tool"><svg><use href="#two"/></svg></button>
          <button class="tool"><svg><use href="#finish"/></svg></button>
          <button class="tool"><svg><use href="#blade"/></svg></button>
          <button class="tool"><svg><use href="#ring"/></svg></button>
          <button class="tool"><svg><use href="#mold"/></svg></button>
          <i class="bar"></i>
          <button class="tool"><svg><use href="#hatch"/></svg></button>
        </div>
      </aside>

      <section class="manager">
        <div class="manager-title">
          <h2>操作管理員</h2>
          <button class="btn mini" aria-label="Menu"><i class="tri"></i></button>
          <button class="btn mini">X</button>
        </div>
        <div class="tabs">
          <button class="tab active">刀具路徑</button>
          <button class="tab">實體</button>
          <button class="tab">浮雕</button>
        </div>
        <div class="manager-tools">
          <button class="tool"><svg><use href="#selall"/></svg></button>
          <button class="tool"><svg><use href="#selnone"/></svg></button>
          <i class="sep"></i>
          <button class="tool"><svg><use href="#regen"/></svg></button>
          <button class="tool"><svg><use href="#regenx"/></svg></button>
          <i class="sep"></i>
          <button class="tool"><svg><use href="#waves"/></svg></button>
          <button class="tool"><svg><use href="#solid"/></svg></button>
          <button class="tool g1">G1</button>
          <button class="tool"><svg><use href="#feed"/></svg></button>
          <i class="sep"></i>
          <button class="tool"><svg><use href="#dynamite"/></svg></button>
          <i class="sep"></i>
          <button class="tool"><svg><use href="#help"/></svg></button>
        </div>
        <div class="manager-tools">
          <button class="tool"><svg><use href="#lock"/></svg></button>
          <button class="tool"><svg><use href="#bwaves"/></svg></button>
          <button class="tool"><svg><use href="#ghost"/></svg></button>
          <i class="sep"></i>
          <button class="tool"><svg><use href="#down"/></svg></button>
          <button class="tool"><svg><use href="#up"/></svg></button>
          <button class="tool"><svg><use href="#insert"/></svg></button>
          <button class="tool"><svg><use href="#updown"/></svg></button>
          <i class="sep"></i>
          <button class="tool"><svg><use href="#wavecur"/></svg></button>
          <button class="tool"><svg><use href="#shapes"/></svg></button>
        </div>
        <ul class="tree ops">
          <li><i class="guide lone"><b class="expander">−</b></i><svg class="ico"><use href="#machine"/></svg><span>T-1</span></li>
          <li><i class="gap"></i><i class="guide"><b class="expander">+</b></i><svg class="ico"><use href="#props"/></svg><span>屬性 - 100I</span></li>
          <li><i class="gap"></i><i class="guide end"><b class="expander">−</b></i><svg class="ico"><use href="#group"/></svg><span>刀具路徑群組-1</span></li>
          <li><i class="gap"></i><i class="gap"></i><i class="guide"><b class="expander">−</b></i><svg class="ico"><use href="#opfold"/></svg><span class="picked">1 - 攻牙(G84) - [刀具面: 俯視圖]</span></li>
          <li><i class="gap"></i><i class="gap"></i><i class="guide pass"></i><i class="guide"></i><svg class="ico"><use href="#folder"/></svg><span>參數</span></li>
          <li><i class="gap"></i><i class="gap"></i><i class="guide pass"></i><i class="guide"></i><svg class="ico"><use href="#bit"/></svg><span>#1 - M1.00 平刀 - .2</span></li>
          <li><i class="gap"></i><i class="gap"></i><i class="guide pass"></i><i class="guide"></i><svg class="ico"><use href="#geom"/></svg><span>圖形 - (5) 點</span></li>
          <li><i class="gap"></i><i class="gap"></i><i class="guide pass"></i><i class="guide end"></i><svg class="ico"><use href="#waves"/></svg><span>刀具路徑 - 5.2K - 刀具路宰群組-1</span></li>
          <li><i class="gap"></i><i class="gap"></i><i class="guide end"></i><svg class="ico"><use href="#redplay"/></svg></li>
        </ul>
      </section>

      <section class="viewport">
        <div class="axes">
          <svg viewBox="0 0 56 50" width="56" height="50"><path d="M20.500 18v20" stroke="#3fd03f"/><path d="M20 38.500h20" stroke="#e01818"/><text x="17" y="12" fill="#3fd03f">Y</text><text x="47" y="43" fill="#e01818">X</text></svg>
          <p>螢幕視角:俯視圖 &nbsp; WCS:俯視圖 &nbsp; 刀具 / 構圖面:俯視圖</p>
        </div>
        <div class="scale"><b>5.999</b><span>公制</span></div>
      </section>

      <section class="dialog" role="dialog" aria-labelledby="dlg-title">
        <div class="dialog-title">
          <h2 id="dlg-title">2D 刀具路徑 - 預點/鑽孔等... 攻牙-進給下刀.主軸反轉-進給退刀</h2>
          <button class="dialog-close" aria-label="Close">✖</button>
        </div>
        <div class="client">
          <div class="dialog-tools">
            <button class="tool lg"><svg><use href="#holder"/></svg></button>
            <i class="sep"></i>
            <button class="tool lg"><svg><use href="#disk"/></svg></button>
            <button class="tool lg"><svg><use href="#diskdown"/></svg></button>
          </div>
          <div class="dialog-body">
            <div class="side">
              <div class="well pages">
                <ul class="tree">
                  <li><i class="guide start"></i><span>刀具路徑類型</span></li>
                  <li><i class="guide"></i><span class="picked">刀具</span></li>
                  <li><i class="guide"></i><span>夾頭</span></li>
                  <li><i class="guide"></i></li>
                  <li><i class="guide"></i><span>切削參數</span></li>
                  <li><i class="guide"><b class="expander">−</b></i><span>連接參數</span></li>
                  <li><i class="guide pass"></i><i class="guide short"></i><svg class="ico"><use href="#no"/></svg><span>補正方式</span></li>
                  <li><i class="guide pass"></i><i class="guide end"></i><span>原點／參考點</span></li>
                  <li><i class="guide"></i></li>
                  <li><i class="guide"></i><span>平面 (WCS)</span></li>
                  <li><i class="guide"></i><span>冷卻液</span></li>
                  <li><i class="guide"></i><span>插入指令</span></li>
                  <li><i class="guide"></i><span>雜項變數</span></li>
                  <li><i class="guide end"><b class="expander">−</b></i><span>控制軸</span></li>
                  <li><i class="gap"></i><i class="guide"></i><span>軸結合</span></li>
                  <li><i class="gap"></i><i class="guide end"></i><span>旋轉軸控制</span></li>
                </ul>
                <div class="vbar"><i class="tri up"></i><b class="thumb long"></b><i class="tri"></i></div>
              </div>
              <h3>快速檢視設定</h3>
              <div class="well quick">
                <div class="quick-row">
                  <div class="quick-clip">
                    <table>
                      <tr><td>刀具</td><td>&nbsp;.2</td></tr>
                      <tr><td>刀具直徑</td><td>1</td></tr>
                      <tr><td>刀角半徑</td><td>0</td></tr>
                      <tr><td>進給率</td><td>1.5</td></tr>
                      <tr><td>主軸轉速</td><td>300</td></tr>
                      <tr><td>冷卻液</td><td>開</td></tr>
                      <tr><td>刀具長度</td><td>30</td></tr>
                      <tr><td>刀長補正</td><td>1</td></tr>
                      <tr><td>半徑補正</td><td>31</td></tr>
                    </table>
                  </div>
                  <div class="vbar"><i class="tri up"></i><b class="thumb"></b><i class="tri"></i></div>
                </div>
                <div class="hbar"><i class="tri left"></i><b class="thumb"></b><i class="tri right"></i></div>
              </div>
              <p class="legend"><svg class="ico"><use href="#edit"/></svg><span>=</span>編輯</p>
              <p class="legend"><svg class="ico"><use href="#no"/></svg><span>=</span>無效</p>
            </div>

            <div class="content">
              <div class="frame">
                <div class="library">
                  <div class="well grid">
                    <div class="grid-clip">
                      <table>
                        <thead><tr><th>編號</th><th>刀具名稱</th><th>直徑</th><th>刀角半徑</th><th>長</th></tr></thead>
                        <tbody><tr><td><svg class="ico"><use href="#toolok"/></svg>1</td><td>.2</td><td>1.0</td><td>0.0</td><td>7</td></tr></tbody>
                      </table>
                    </div>
                    <div class="hbar"><i class="tri left"></i><b class="thumb"></b><i class="tri right"></i></div>
                  </div>
                  <p class="hint">＊按滑鼠右鍵有更多選項</p>
                  <div class="filter">
                    <button class="btn pick">從刀具庫選刀</button>
                    <label><input type="checkbox">啟用刀具過濾</label>
                    <button class="btn filter-btn">刀具過濾(F)</button>
                  </div>
                  <label class="batch"><input type="checkbox">批次模式</label>
                </div>

                <div class="params">
                  <div class="fields">
                    <label for="dia">刀具直徑：</label><input id="dia" class="hot" value="1.0">
                    <label for="rad" class="lead">刀角半徑：</label><input id="rad" value="0.0" readonly>
                  </div>
                  <hr class="inset">
                  <div class="fields">
                    <label for="name">刀具名稱：</label><input id="name" class="full" value=".2">
                    <label for="num">刀具號碼：</label><input id="num" class="hot" value="1">
                    <label for="len">刀長補正：</label><input id="len" class="hot" value="1">
                    <label for="head">刀座編號：</label><input id="head" class="hot" value="-1">
                    <label for="doff">刀徑補正：</label><input id="doff" value="31" readonly>
                  </div>
                  <hr>
                  <div class="fields spindle">
                    <label for="dir" class="right">主軸方向：</label><select id="dir" class="combo"><option>順時針</option></select>
                  </div>
                  <div class="fields feeds">
                    <label for="feed-rate">進給率：</label><input id="feed-rate" class="hot" value="1.5">
                    <label for="speed">主軸轉速：</label><input id="speed" class="hot" value="300">
                    <label for="fpt">FPT：</label><input id="fpt" class="hot" value="0.0025">
                    <label for="cs">CS：</label><input id="cs" class="hot" value="0.9425">
                    <label for="plunge">下刀速率：</label><input id="plunge" value="200.0" readonly>
                    <label for="retract">提刀速率：</label><input id="retract" value="1000.0" readonly>
                  </div>
                  <div class="checks">
                    <label><input type="checkbox">強制換刀</label>
                    <label class="off"><input type="checkbox" disabled>快速提刀</label>
                  </div>
                  <hr>
                  <label class="note" for="note">註解</label>
                  <div class="note-box"><textarea id="note"></textarea><div class="vbar"><i class="tri up"></i><i class="tri"></i></div></div>
                </div>
              </div>
              <div class="actions">
                <button class="btn" aria-label="OK"><svg><use href="#check"/></svg></button>
                <button class="btn" aria-label="Cancel"><svg><use href="#cross"/></svg></button>
                <button class="btn off" aria-label="Apply"><svg><use href="#addgrey"/></svg></button>
                <button class="btn" aria-label="Help"><svg><use href="#help"/></svg></button>
              </div>
            </div>
          </div>
        </div>
      </section>
    </main>

    <footer class="status">
      <p>說明， 請按 Alt+H.</p>
      <button class="btn">3D</button>
      <button class="btn w62">螢幕視角</button>
      <button class="btn">平面</button>
      <div class="pair"><button class="btn">Z:</button><span class="cell z"><input aria-label="Z depth" value="0.0"><i class="tri"></i></span></div>
      <div class="pair"><input class="color" aria-label="Color" value="10"><button class="btn" aria-label="Pick color"><i class="tri big"></i></button></div>
      <div class="pair"><button class="btn">層別:</button><span class="cell level"><input aria-label="Level" value="1"><i class="tri"></i></span></div>
      <button class="btn">屬性</button>
      <span class="cell point"><span>⚹</span><i class="tri"></i></span>
      <span class="cell"><i class="stroke"></i><i class="tri"></i></span>
      <span class="cell"><i class="stroke thin"></i><i class="tri"></i></span>
      <button class="btn w39">WCS</button>
      <button class="btn w39">群組</button>
      <button class="btn slim">!</button>
      <button class="btn slim">?</button>
    </footer>

    <div class="taskbar">
      <button class="orb" aria-label="Start"><svg><use href="#winlogo"/></svg></button>
      <button class="task teal"><svg class="ico"><use href="#chrome"/></svg><span>三菱後處理問題請教 ...</span></button>
      <button class="task"><svg class="ico"><use href="#ie"/></svg><span>Internet Explorer 無...</span></button>
      <button class="quick-task"><svg class="ico"><use href="#floppy"/></svg></button>
      <button class="quick-task"><svg class="ico"><use href="#sw"/></svg></button>
      <button class="task lit"><svg class="ico"><use href="#xlogo"/></svg><span>Mastercam 銑床 王...</span></button>
      <button class="quick-task"><svg class="ico"><use href="#xlogo"/></svg></button>
      <button class="task joined"><svg class="ico"><use href="#yfolder"/></svg><span>config</span></button>
      <button class="task"><svg class="ico"><use href="#yfolder"/></svg><span>config</span></button>
      <button class="quick-task"><svg class="ico"><use href="#calc"/></svg></button>
      <button class="quick-task"><svg class="ico"><use href="#ball"/></svg></button>
      <button class="task"><svg class="ico"><use href="#creo"/></svg><span>Creo Elements/Pro ...</span></button>
      <button class="task"><svg class="ico"><use href="#note-icon"/></svg><span>config - 記事本</span></button>
      <button class="task"><svg class="ico"><use href="#pfe"/></svg><span>Programmer's File E...</span></button>
      <div class="tray">
        <svg class="ico"><use href="#kbd"/></svg>
        <svg class="lang"><use href="#langbar"/></svg>
        <svg class="ico"><use href="#xlogo"/></svg>
        <span class="mark">三维网www.3dportal.cn</span>
        <button class="desk" aria-label="Show desktop"></button>
      </div>
    </div>
  </body>
</html>
```
FILE: styles.css
```css
:root {
  --face: #f0f0f0;
  --lavender: #d5daec;
  --edge: #9a9aa4;
  --ui: "Noto Sans", "Noto Sans CJK TC", sans-serif;
  --ming: "Liberation Serif", "Noto Sans CJK TC", serif;
}

* {
  box-sizing: border-box;
}

body {
  display: flex;
  flex-direction: column;
  min-height: 100vh;
  margin: 0;
  overflow: hidden;
  background: var(--face);
  color: #000;
  font: 12px/16px var(--ui);
}

h1,
h2,
h3,
p,
ul {
  margin: 0;
  padding: 0;
  font-size: inherit;
  font-weight: normal;
}

button,
input,
select,
textarea {
  margin: 0;
  padding: 0;
  border: 0;
  border-radius: 0;
  background: none;
  color: inherit;
  font: inherit;
}

i,
b {
  font-style: normal;
  font-weight: normal;
}

.sprite {
  display: none;
}

.ico {
  flex: none;
  width: 16px;
  height: 16px;
}

/* window title */
.titlebar {
  display: flex;
  align-items: center;
  gap: 4px;
  height: 22px;
  padding-left: 1px;
  border-bottom: 1px solid #27486f;
  background: radial-gradient(ellipse 260px 24px at 200px 12px, #e2f0fd 50%, transparent),
    linear-gradient(90deg, #a9cdee, #8fbfe9 28%, #3f81c4 32%, #5c9fe3 45%, #5c9fe3 52%, #2c68a8 60%, #5594d6 66%, #5594d6 70%, #2a66a6 77%, #4179b4 88%, #6d9fcb);
}

.titlebar h1 {
  flex: 1;
}

.wincontrols {
  display: flex;
  align-self: flex-start;
  height: 18px;
  margin-right: 3px;
  border: 1px solid #d3e6f5;
  border-top: 0;
  border-radius: 0 0 5px 5px;
  background: #82b0d8;
  box-shadow: 0 0 0 1px #3d6288;
}

.wincontrols button {
  display: flex;
  align-items: center;
  justify-content: center;
  width: 27px;
  border-right: 1px solid #b9d3e8;
  color: #fff;
  text-shadow: 0 0 2px #223, 0 0 1px #223;
}

.wincontrols .wide {
  width: 47px;
  border: 0;
  background: radial-gradient(circle at 20% 90%, #cffaff, transparent 60%);
}

.wincontrols .min {
  width: 12px;
  height: 5px;
  border: 1px solid #4a5866;
  background: #fff;
}

.wincontrols .max {
  width: 10px;
  height: 10px;
  border: 3px solid #fff;
  outline: 1px solid #4a5866;
}

.menubar {
  display: flex;
  gap: 15px;
  height: 20px;
  padding: 0 7px;
  border-bottom: 1px solid #a9aebc;
  background: linear-gradient(#fff, #f1f3fa 35%, #dde2f1 40%, #d9deef);
  line-height: 18px;
}

.menubar a {
  color: #747474;
  text-decoration: none;
}

/* toolbars */
.toolrow {
  display: flex;
  height: 30px;
  border-top: 1px solid #fff;
  background: linear-gradient(#f6f8fd, var(--lavender) 40%);
}

.toolrow.second {
  height: 31px;
  border-bottom: 1px solid var(--edge);
  background: var(--lavender);
}

.group {
  display: flex;
  align-items: center;
  padding: 0 4px 0 10px;
  border-right: 1px solid var(--edge);
  border-bottom: 1px solid var(--edge);
  background: var(--face);
  box-shadow: inset 1px 1px #fff;
}

.second .group {
  border-bottom: 0;
}

.second .group:last-child {
  padding-left: 12px;
  padding-right: 6px;
}

.group.grip {
  background: linear-gradient(90deg, var(--face) 3px, transparent 3px 5px, var(--face) 5px),
    repeating-linear-gradient(#aaa 0 2px, var(--face) 2px 5px);
}

.group.green {
  color: #5b7f10;
}

.tool {
  display: flex;
  align-items: center;
  justify-content: center;
  width: 23px;
  height: 22px;
}

.tool svg {
  width: 17px;
  height: 17px;
}

.tool svg.big {
  width: 20px;
  height: 20px;
}

.tool.dim {
  flex-direction: column;
  color: #28348c;
  font: bold 11px/9px "Liberation Serif", serif;
}

.tool.dim span + span {
  border-top: 1px solid #28348c;
}

.sep {
  width: 1px;
  height: 18px;
  margin: 0 4px 0 3px;
  background: #8c8c8c;
}

.more {
  width: 15px;
  height: 20px;
}

.more::before,
.tri {
  display: inline-block;
  width: 0;
  height: 0;
  border: 4px solid transparent;
  border-top: 5px solid #111;
  border-bottom: 0;
  content: "";
}

.more.off::before,
.coord .tri {
  border-top-color: #999;
}

.btn {
  display: flex;
  align-items: center;
  justify-content: center;
  height: 20px;
  border: 1px solid #868686;
  border-radius: 3px;
  background: linear-gradient(#f4f4f4, #ebebeb 50%, #dcdcdc 50%, #d2d2d2);
  box-shadow: inset 0 0 0 1px #fbfbfb;
  white-space: nowrap;
}

.btn.square {
  width: 22px;
  height: 22px;
}

.combo {
  height: 20px;
  padding-left: 3px;
  border: 1px solid #868686;
  border-radius: 3px;
  appearance: none;
  background: conic-gradient(from -45deg at 50% 100%, #111 90deg, transparent 0) right 5px center / 8px 4px no-repeat,
    linear-gradient(#f4f4f4, #dedede);
  background: linear-gradient(to bottom right, #111 50%, transparent 51%) right 4px center / 4px 4px no-repeat,
    linear-gradient(to bottom left, #111 50%, transparent 51%) right 8px center / 4px 4px no-repeat,
    linear-gradient(#f4f4f4, #dedede);
  font-family: var(--ming);
}

.select-group {
  gap: 8px;
  padding: 0 9px 0 15px;
}

.select-group > .btn:not(.square) {
  width: 47px;
}

.select-group .combo {
  width: 72px;
}

.picks {
  display: flex;
  align-items: center;
}

.picks .btn {
  margin-left: 3px;
}

.coords {
  gap: 5px;
  padding: 0 10px 0 6px;
}

.coords .more {
  width: 10px;
}

.axis {
  width: 21px;
  border-color: #b4b4b4;
  background: var(--face);
  font-family: "Liberation Serif", serif;
  text-decoration: underline;
}

.coord {
  display: flex;
  align-items: center;
  justify-content: space-between;
  width: 72px;
  height: 20px;
  margin-right: 7px;
  padding: 0 4px 0 2px;
  border: 1px solid #b4b4b4;
  border-radius: 2px;
  background: #fff;
}

.coord input {
  width: 50px;
  height: 15px;
  background: var(--face);
  font: 12px/15px var(--ming);
}

.coords .tool {
  width: 19px;
}

.ribbon {
  height: 27px;
  padding-left: 186px;
  border-top: 1px solid #fff;
  font: 13px/26px var(--ming);
}

/* workspace */
.workspace {
  position: relative;
  display: flex;
  flex: 1;
  min-height: 0;
  border-top: 1px solid var(--edge);
}

.strip {
  width: 30px;
  border-right: 1px solid #8a91a8;
  background: var(--lavender);
}

.strip-group {
  display: flex;
  flex-direction: column;
  align-items: center;
  padding: 11px 2px 3px 0;
  border-bottom: 1px solid var(--edge);
  background: var(--face);
}

.strip .pressed {
  border: 1px solid #555;
  border-radius: 3px;
  background: #d7e3ee;
}

.bar {
  width: 20px;
  height: 1px;
  margin: 4px 0 3px;
  background: #999;
}

.manager {
  display: flex;
  flex-direction: column;
  width: 331px;
  padding-right: 4px;
  border-right: 1px solid #8a8a8a;
}

.manager-title {
  display: flex;
  align-items: center;
  gap: 5px;
  height: 19px;
  padding-left: 3px;
  background: #ababab;
  font-size: 11px;
}

.manager-title h2 {
  flex: 1;
}

.btn.mini {
  width: 17px;
  height: 17px;
  font-family: "Liberation Serif", serif;
}

.tabs {
  display: flex;
  align-items: flex-end;
  height: 21px;
  border-bottom: 1px solid #999;
}

.tab {
  width: 46px;
  height: 18px;
  padding-left: 4px;
  border: 1px solid #999;
  border-bottom: 0;
  background: linear-gradient(#efefef, #d9d9d9);
  text-align: left;
}

.tab.active {
  width: 62px;
  height: 20px;
  padding-left: 5px;
  background: #fff;
}

.manager-tools {
  display: flex;
  align-items: center;
  height: 34px;
  padding-left: 7px;
  border-bottom: 1px solid #bbb;
}

.manager-tools + .manager-tools {
  height: 31px;
  border-bottom: 0;
}

.manager-tools .sep {
  margin: 0 2px 0 3px;
}

.g1 {
  color: #24408c;
  font: bold 13px/16px "Liberation Serif", serif;
}

.tree {
  margin: 0;
  list-style: none;
}

.tree li {
  display: flex;
  height: 16px;
  white-space: nowrap;
}

.guide {
  flex: none;
  width: 27px;
  margin-right: 5px;
  background: repeating-linear-gradient(#777 0 1px, transparent 1px 2px) 0 0 / 1px 100% no-repeat,
    repeating-linear-gradient(90deg, #777 0 1px, transparent 1px 2px) 0 8px / 100% 1px no-repeat;
}

.guide.end {
  background-size: 1px 9px, 100% 1px;
}

.guide.start {
  background-position: 0 8px, 0 8px;
}

.guide.lone {
  background-size: 0 0, 100% 1px;
}

.guide.pass {
  width: 19px;
  margin: 0;
  background-size: 1px 100%, 0 0;
}

.guide.short {
  width: 11px;
}

.gap {
  flex: none;
  width: 19px;
}

.expander {
  display: block;
  width: 9px;
  height: 9px;
  margin: 4px 0 0 -4px;
  border: 1px solid #919191;
  background: #fff;
  color: #222;
  font: 9px/7px var(--ui);
  text-align: center;
}

.tree span {
  padding: 0 2px 0 0;
}

.tree .picked {
  background: #3294f0;
  color: #fff;
}

.ops {
  flex: 1;
  margin: 5px 0 6px 4px;
  padding: 1px 0 0 12px;
  border: 1px solid #828790;
  background: #fff;
  overflow: hidden;
  font-family: var(--ming);
}

.ops .guide {
  width: 11px;
  margin: 0;
}

.ops .guide.pass {
  width: 19px;
}

.ops span {
  margin-left: 5px;
}

.ops .picked {
  margin-left: 3px;
  padding: 0 2px;
}

.viewport {
  display: flex;
  flex: 1;
  align-items: flex-end;
  justify-content: space-between;
  padding: 0 26px 9px 7px;
  background: #000;
  color: #e6e6e6;
}

.axes svg {
  display: block;
  margin: 0 0 4px 15px;
  font: 12px var(--ui);
}

.scale {
  display: flex;
  flex-direction: column;
  align-items: center;
  width: 96px;
  margin-bottom: 2px;
  padding-right: 12px;
  border: solid #ffff80;
  border-width: 0 1px;
  background: linear-gradient(#ffff80, #ffff80) 0 12px / 100% 1px no-repeat;
  font-size: 12px;
  line-height: 13px;
}

.scale b {
  padding-bottom: 2px;
  color: #3fd03f;
  line-height: 11px;
}

/* drill dialog */
.dialog {
  position: absolute;
  top: 53px;
  left: 311px;
  width: 862px;
  padding: 0 6px 6px;
  border: 1px solid #d8dde0;
  border-radius: 7px;
  background: linear-gradient(#7a8083, #7a8083 28%, #0d141a 29%) right / 20px 100% no-repeat,
    linear-gradient(90deg, #bcd6f2 45px, #0d1218 55px);
  box-shadow: 0 0 8px 2px rgba(0, 0, 0, 0.7);
}

.dialog-title {
  display: flex;
  justify-content: space-between;
  height: 27px;
  margin: 0 -6px;
  padding: 0 5px 0 6px;
  border-radius: 6px 6px 0 0;
  background: linear-gradient(rgba(0, 0, 0, 0.35), transparent 40%, transparent 70%, rgba(0, 0, 0, 0.35)),
    linear-gradient(90deg, #dbe8f6 20px, #d2dae2 42px, #858585 62px, #8a8a8a 320px, #06090d 360px, #06090d 590px, #666b6f 720px, #7b8184);
}

.dialog-title h2 {
  line-height: 26px;
}

.dialog-close {
  width: 47px;
  height: 19px;
  border: 1px solid #eac3bd;
  border-top: 0;
  border-radius: 0 0 5px 5px;
  background: linear-gradient(#dd9a8e, #c8604e 45%, #a82412 50%, #c9442b);
  color: #fff;
}

.client {
  border: 1px solid #555;
  background: var(--face);
}

.dialog-tools {
  display: flex;
  align-items: center;
  height: 43px;
  padding-left: 6px;
  border-bottom: 1px solid #a4a4b0;
  box-shadow: inset 1px 1px #fff;
}

.tool.lg {
  width: 32px;
}

.tool.lg svg {
  width: 23px;
  height: 23px;
}

.dialog-tools .sep {
  height: 26px;
  margin: 0 3px 0 1px;
}

.dialog-body {
  display: flex;
  gap: 9px;
  padding: 7px 7px 7px 5px;
  font-family: var(--ming);
}

.well {
  border: 1px solid #828790;
  background: #fff;
}

.side {
  width: 173px;
}

.pages {
  display: flex;
  height: 255px;
  overflow: hidden;
}

.pages .tree {
  flex: 1;
  padding: 1px 0 0 12px;
}

.pages .ico {
  margin: 0 4px 0 -5px;
  padding: 2px;
}

.pages .picked {
  margin-left: -2px;
  padding: 0 2px;
}

.vbar {
  display: flex;
  flex-direction: column;
  align-items: center;
  justify-content: space-between;
  width: 15px;
  margin: 1px;
  padding: 6px 0;
  background: #eee;
}

.vbar .tri {
  border-width: 4px 3px 0;
}

.vbar .tri.up {
  border: 3px solid transparent;
  border-top: 0;
  border-bottom: 4px solid #333;
}

.thumb {
  width: 14px;
  height: 67px;
  border: 1px solid #979797;
  border-radius: 2px;
  background: repeating-linear-gradient(#555 0 1px, transparent 1px 3px) center / 7px 8px no-repeat,
    linear-gradient(90deg, #f4f4f4, #dcdcdc 50%, #c9c9c9);
}

.vbar .thumb {
  margin: 8px 0 auto;
}

.thumb.long {
  height: 201px;
}

.hbar {
  display: flex;
  align-items: center;
  height: 15px;
  margin: 0 1px 1px;
  padding: 0 5px;
  background: #eee;
}

.hbar .thumb {
  width: 105px;
  height: 14px;
  margin: 0 auto 0 8px;
  background: repeating-linear-gradient(90deg, #555 0 1px, transparent 1px 3px) center / 8px 7px no-repeat,
    linear-gradient(#f4f4f4, #dcdcdc 50%, #c9c9c9);
}

.hbar .left,
.hbar .right {
  border: 3px solid transparent;
  border-left: 0;
  border-right: 4px solid #333;
}

.hbar .right {
  border-right: 0;
  border-left: 4px solid #333;
}

.side h3 {
  padding-top: 5px;
  line-height: 25px;
}

.quick {
  height: 158px;
}

.quick-row {
  display: flex;
  height: 140px;
}

.quick-clip {
  flex: 1;
  padding-top: 1px;
  overflow: hidden;
}

.quick table {
  border-spacing: 0;
}

.quick td {
  height: 16px;
  padding: 1px 0 0 6px;
  line-height: 15px;
}

.quick td:first-child {
  width: 78px;
}

.quick .right {
  margin-right: 17px;
}

.legend {
  display: flex;
  align-items: center;
  height: 21px;
  padding: 4px 0 0 2px;
}

.legend .ico {
  width: 13px;
  height: 13px;
}

.legend span {
  width: 12px;
  margin-left: 8px;
}

.content {
  flex: 1;
}

.frame {
  display: flex;
  gap: 10px;
  height: 442px;
  padding: 10px 10px 0 11px;
  border: 1px solid #fff;
  border-top: 2px solid #777;
  border-left: 2px solid #777;
}

.library {
  display: flex;
  flex-direction: column;
  width: 315px;
  padding-top: 16px;
}

.grid {
  height: 243px;
}

.grid-clip {
  height: 224px;
  overflow: hidden;
}

.grid table {
  width: 340px;
  margin: 1px;
  border-spacing: 0;
  table-layout: fixed;
}

.grid th {
  height: 24px;
  padding: 1px 0 0 5px;
  border-right: 1px solid #dfdfdf;
  border-bottom: 1px solid #d5d5d5;
  background: linear-gradient(#fff 50%, #f4f5f6 50%);
  font-weight: normal;
  text-align: left;
  white-space: nowrap;
}

.grid th:nth-child(1) {
  width: 143px;
}

.grid th:nth-child(2) {
  width: 61px;
}

.grid th:nth-child(3) {
  width: 36px;
}

.grid th:nth-child(4) {
  width: 60px;
}

.grid td {
  height: 18px;
  padding: 0 0 0 5px;
  background: #efefef;
}

.grid td:first-child {
  padding: 0;
}

.grid td .ico {
  margin-right: 20px;
  vertical-align: middle;
}

.grid .thumb {
  width: 202px;
}

.hint {
  padding-top: 4px;
  text-align: right;
}

.filter {
  display: flex;
  align-items: center;
  justify-content: space-between;
  margin-top: 11px;
  padding-right: 2px;
}

.filter .btn {
  height: 25px;
}

.pick {
  width: 97px;
}

.filter-btn {
  width: 73px;
}

.filter label {
  margin-left: 24px;
}

.filter label,
.batch,
.checks label {
  display: flex;
  align-items: center;
  gap: 3px;
}

.batch {
  margin-top: 91px;
}

input[type="checkbox"] {
  width: 13px;
  height: 13px;
  appearance: none;
  border: 1px solid #8e8f8f;
  background: #e3e6ea;
  box-shadow: inset 0 0 0 2px #f6f6f6;
}

input[type="checkbox"]:disabled {
  border-color: #bbb;
  background: #fafafa;
}

.params {
  flex: 1;
}

.fields {
  display: grid;
  grid-template-columns: 83px 60px 1fr 60px;
  gap: 7px 4px;
}

.fields label {
  line-height: 20px;
  text-align: right;
  white-space: nowrap;
}

.fields .lead {
  grid-column: 1;
}

.fields .right {
  grid-column: 3;
}

.fields input {
  width: 100%;
  height: 20px;
  padding: 0 3px 3px;
  border: 1px solid #b0b0b0;
  border-radius: 2px;
}

.fields .hot {
  border-color: #d9dfe6;
  border-top-color: #abadb3;
  background: #ffff80;
}

.fields .full {
  grid-column: 2 / 5;
  border-color: #e2e3ea;
  border-top-color: #abadb3;
  background: #fff;
}

.params hr {
  height: 2px;
  margin: 7px 0 6px;
  border: 0;
  border-top: 1px solid #999;
  background: #fff;
}

.params .inset {
  margin-left: 8px;
}

.spindle {
  margin-top: 55px;
}

.feeds {
  margin-top: 4px;
}

.checks {
  display: flex;
  gap: 92px;
  margin-top: 5px;
  padding-left: 29px;
}

.checks .off {
  color: #888;
}

.checks + hr {
  margin-top: 9px;
}

.note {
  display: block;
  padding-left: 3px;
  line-height: 14px;
}

.note-box {
  display: flex;
  height: 54px;
  margin-left: 3px;
  border: 1px solid #e2e3ea;
  border-top-color: #abadb3;
  background: #fff;
}

.note-box textarea {
  flex: 1;
  outline: 0;
  resize: none;
}

.note-box .tri {
  opacity: 0.5;
}

.actions {
  display: flex;
  justify-content: flex-end;
  gap: 8px;
  margin-top: 34px;
  padding-right: 1px;
}

.actions .btn {
  width: 52px;
  height: 25px;
}

.actions .off {
  background: var(--face);
  border-color: #ccc;
}

.actions svg {
  width: 19px;
  height: 19px;
}

.actions .off svg {
  width: 24px;
  height: 24px;
}

/* status line */
.status {
  display: flex;
  align-items: center;
  gap: 6px;
  height: 25px;
  padding-left: 3px;
  border-top: 1px solid var(--edge);
  background: #f0eeed;
  overflow: hidden;
}

.status p {
  flex: 1;
}

.status .btn {
  min-width: 25px;
  padding: 0 2px;
  border-color: #b0b0b0;
  background: #f2f2f2;
}

.status .w62 {
  width: 63px;
}

.status .w39 {
  width: 39px;
}

.status .slim {
  min-width: 11px;
}

.pair {
  display: flex;
  align-items: center;
}

.pair .btn {
  min-width: 16px;
}

.cell {
  display: flex;
  align-items: center;
  justify-content: space-between;
  gap: 9px;
  height: 22px;
  padding: 0 4px;
  background: #fff;
}

.cell input {
  width: 62px;
  height: 19px;
}

.cell.z {
  padding-left: 2px;
}

.cell.z input {
  background: #ffff80;
}

.cell.level {
  width: 100px;
}

.cell.point {
  width: 36px;
}

.color {
  width: 32px;
  height: 19px;
  background: #0f0;
  text-align: center;
}

.tri.big {
  border-width: 8px 4px 0;
}

.stroke {
  width: 40px;
  height: 3px;
  background: #000;
}

.stroke.thin {
  width: 44px;
  height: 1px;
}

.taskbar {
  display: flex;
  height: 31px;
  border-top: 1px solid #1c2833;
  background: linear-gradient(90deg, #1b5a91, #4a86b4 12%, #8ea7c4 26%, #8aa6c4 86%, #19416f 88%, #15396a);
}

.orb {
  display: flex;
  align-items: center;
  justify-content: center;
  width: 34px;
  height: 36px;
  margin: -5px 16px 0 10px;
  border: 1px solid #1b466c;
  border-radius: 50%;
  background: radial-gradient(circle at 50% 95%, #2fe0ff, #2870a4 45%, #7ea2be);
}

.orb svg {
  width: 22px;
  height: 22px;
}

.task {
  display: flex;
  align-items: center;
  gap: 4px;
  width: 159px;
  height: 29px;
  margin-right: 3px;
  padding-left: 8px;
  border: 1px solid #31485f;
  border-radius: 3px;
  background: linear-gradient(165deg, #b9cadb 20%, #9bb2c9 50%, #8aa5c0);
  box-shadow: inset 0 0 0 1px rgba(255, 255, 255, 0.4);
  color: #fff;
  white-space: nowrap;
}

.task.teal {
  background: linear-gradient(165deg, #6fa5bd, #3f84a6 50%, #3a83ab);
}

.task.lit {
  background: linear-gradient(165deg, #e5ebf0, #bccbd9 60%, #a9bccf);
}

.task.joined {
  margin-right: 0;
}

.quick-task {
  width: 46px;
}

.tray {
  display: flex;
  flex: 1;
  align-items: center;
  justify-content: flex-end;
}

.lang {
  width: 8px;
  height: 24px;
  margin: 0 8px 0 10px;
}

.mark {
  margin-left: 4px;
  color: #fff;
  font: bold 16px/20px "DejaVu Sans", "Noto Sans CJK SC", sans-serif;
  text-shadow: 1px 1px #d22, -1px 1px #d22, 1px -1px #d22, -1px -1px #d22, 0 0 2px #f66;
  white-space: nowrap;
}

.desk {
  width: 14px;
  height: 30px;
  margin-left: 5px;
  border: 1px solid #6d8fb0;
  background: #1c4470;
}
```
